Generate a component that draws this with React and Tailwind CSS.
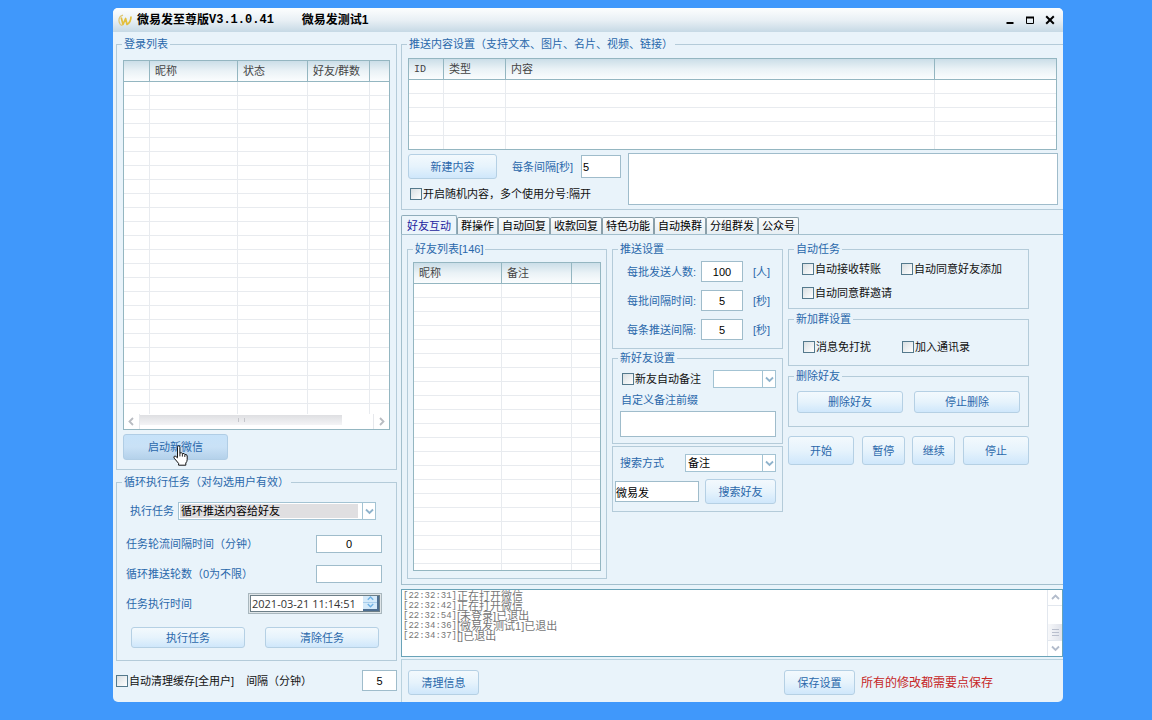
import React from "react";

const CJK = "font-['Liberation_Sans','Noto_Sans_CJK_SC',sans-serif]";
const BLUE = "text-[#2a68ab]";

function Chevron({ dir = "down", className = "size-[9px]" }) {
  const paths = {
    down: "M1 2.5 4.5 6 8 2.5",
    up: "M1 6 4.5 2.5 8 6",
    left: "M6 1 2.5 4.5 6 8",
    right: "M3 1 6.5 4.5 3 8",
  };
  return (
    <svg viewBox="0 0 9 9" className={className} fill="none" stroke="currentColor" strokeWidth="1.8" aria-hidden="true">
      <path d={paths[dir]} />
    </svg>
  );
}

function Group({ title, className = "", bodyClass = "", children }) {
  return (
    <fieldset className={`min-w-0 border border-[#b4cbd9] ${className}`}>
      <legend className={`ml-[5px] px-[2px] leading-[14px] ${BLUE}`}>{title}</legend>
      <div className={bodyClass}>{children}</div>
    </fieldset>
  );
}

function Btn({ className = "", children }) {
  return (
    <button
      type="button"
      className={`flex items-center justify-center rounded-[3px] border border-[#b5d0e4] bg-linear-to-b from-[#f3f9fd] via-[#e6f3fc] to-[#cfe7fb] whitespace-nowrap ${BLUE} ${className}`}
    >
      {children}
    </button>
  );
}

function Check({ className = "", children }) {
  return (
    <label className={`flex h-[14px] items-center gap-px whitespace-nowrap text-[#111] ${className}`}>
      <input
        type="checkbox"
        className="size-[12px] shrink-0 appearance-none border border-[#54798c] bg-linear-to-br from-[#d9dfe2] to-white checked:bg-[#2a68ab]"
      />
      {children}
    </label>
  );
}

function Field({ className = "", ...props }) {
  return (
    <input
      type="text"
      className={`min-w-0 border border-[#9fbccb] bg-white text-black outline-none ${className}`}
      {...props}
    />
  );
}

function Dropdown({ className = "", band = false, label, id, options }) {
  return (
    <div className={`relative flex border border-[#a3c3d3] bg-white ${className}`}>
      <select
        id={id}
        aria-label={label}
        className={`min-w-0 flex-1 appearance-none text-black outline-none ${band ? "my-px ml-px mr-[17px] bg-[#e0dfe1] pl-px" : "mr-[12px] pl-[2px]"}`}
      >
        {options.map((o) => (
          <option key={o}>{o}</option>
        ))}
      </select>
      <span className="pointer-events-none absolute inset-y-0 right-0 flex w-[13px] items-center justify-center border-l border-[#a3c3d3] text-[#8fb3cc]">
        <Chevron />
      </span>
    </div>
  );
}

function Grid({ cols, rows, className = "", children }) {
  return (
    <div className={`flex flex-col overflow-hidden border border-[#94b6c1] bg-white ${className}`}>
      <div className="min-h-0 flex-1 overflow-hidden">
        <table className="w-full table-fixed border-separate border-spacing-0 text-left">
          <colgroup>
            {cols.map((c, i) => (
              <col key={i} className={c.w} />
            ))}
          </colgroup>
          <thead>
            <tr className="h-[21px]">
              {cols.map((c, i) => (
                <th
                  key={i}
                  className="border-r border-b border-[#94b6c1] bg-linear-to-b from-[#cbdee8] via-[#eaf2f6] to-[#fbfdfe] p-0 pl-[5px] font-normal leading-[14px] text-[#444] last:border-r-0"
                >
                  {c.name}
                </th>
              ))}
            </tr>
          </thead>
          <tbody>
            {Array.from({ length: rows }, (_, r) => (
              <tr key={r} className="h-[14px]">
                {cols.map((c, i) => (
                  <td key={i} className="border-r border-b border-[#e8ebef] p-0 last:border-r-0" />
                ))}
              </tr>
            ))}
          </tbody>
        </table>
      </div>
      {children}
    </div>
  );
}

function HandCursor() {
  return (
    <svg viewBox="0 0 15 21" className="pointer-events-none absolute top-[11px] left-[50px] h-[21px] w-[15px]" aria-hidden="true">
      <path
        d="M4.5 12.5V2.2Q4.5.8 5.7.8T6.9 2.2V8Q9.2 7.2 9.4 8.6 11.6 8 11.8 9.5 14.2 9.2 14.2 11V14.5Q14.2 16.5 12.8 18V20.2H5.6V18.4L1.2 13.2Q.4 11.8 1.4 11.2 2.6 10.6 4.5 12.9Z"
        fill="#fff"
        stroke="#111"
        strokeWidth="1"
        strokeLinejoin="round"
      />
      <path d="M6.9 8v3.4M9.4 8.8v2.8M11.8 9.8v2.2" stroke="#111" strokeWidth=".9" />
    </svg>
  );
}

function TitleBar() {
  return (
    <header className="flex h-6 items-center bg-linear-to-b from-[#fdfefe] via-[#e9f0f5] to-[#c6d9e5] pr-[5px] pl-[5px]">
      <svg viewBox="0 0 14 13" className="h-[13px] w-[14px] shrink-0" fill="none" aria-hidden="true">
        <path d="M5 1.2C2 2 .8 4.500 1 7c.2 2.400 1.600 4 3.400 4.600" stroke="#dfc87a" strokeWidth="1.300" />
        <path d="M3.200 3.500 5 10.500 7.600 4.500 9 10.500C11.500 9 13 6.500 13 2.500" stroke="#e3bf3c" strokeWidth="1.700" strokeLinejoin="round" />
      </svg>
      <h1 className="ml-[5px] flex items-center text-[12px] font-bold leading-[14px] whitespace-pre text-black">
        <span>微易发至尊版</span>
        <span className="font-['Liberation_Mono',monospace]">V3.1.0.41</span>
        <span className="ml-7">微易发测试1</span>
      </h1>
      <div className="ml-auto flex items-center gap-[3px] text-black">
        <button type="button" aria-label="最小化" className="flex h-4 w-[17px] items-center justify-center">
          <svg viewBox="0 0 10 10" className="size-[10px]"><path d="M1.500 7h7v2h-7z" fill="currentColor" /></svg>
        </button>
        <button type="button" aria-label="最大化" className="flex h-4 w-[17px] items-center justify-center">
          <svg viewBox="0 0 10 10" className="size-[10px]" fill="none" stroke="currentColor"><path d="M1.500 2.500h7v6h-7z" /><path d="M1 2.500h8" strokeWidth="2" /></svg>
        </button>
        <button type="button" aria-label="关闭" className="flex h-4 w-[17px] items-center justify-center">
          <svg viewBox="0 0 10 10" className="size-[10px]" stroke="currentColor" strokeWidth="2"><path d="M1.200 1.200l7.600 7.600M8.800 1.200l-7.600 7.600" /></svg>
        </button>
      </div>
    </header>
  );
}

function LeftColumn() {
  return (
    <div className="w-[288px] shrink-0 pt-[5px] pr-1 pl-[3px]">
      <Group title="登录列表" bodyClass="pt-[9px] pb-[9px]">
        <Grid
          rows={24}
          className="mx-[6px] h-[370px]"
          cols={[
            { name: "", w: "w-[26px]" },
            { name: "昵称", w: "w-[88px]" },
            { name: "状态", w: "w-[70px]" },
            { name: "好友/群数", w: "w-[62px]" },
            { name: "", w: "w-auto" },
          ]}
        >
          <div className="flex h-[15px] shrink-0 text-[#b9bcc2]">
            <button type="button" aria-label="向左滚动" className="flex w-4 items-center justify-center border-r border-[#e6e8ec]">
              <Chevron dir="left" />
            </button>
            <div className="flex flex-1">
              <div className="mt-px mb-[4px] flex w-[202px] items-center justify-center bg-linear-to-b from-[#dedfe2] to-[#f4f4f6]">
                <span className="h-[4px] w-[7px] border-x border-[#c5c6cb]" />
              </div>
            </div>
            <button type="button" aria-label="向右滚动" className="flex w-4 items-center justify-center border-l border-[#e6e8ec]">
              <Chevron dir="right" />
            </button>
          </div>
        </Grid>
        <div className="relative mt-1 ml-[6px] w-[105px]">
          <button
            type="button"
            className={`flex h-[26px] w-full items-center justify-center rounded-[3px] border border-[#b0cde5] bg-linear-to-b from-[#c6e2f9] via-[#c9e1f6] to-[#b4d1ea] ${BLUE}`}
          >
            启动新微信
          </button>
          <HandCursor />
        </div>
      </Group>

      <Group title="循环执行任务（对勾选用户有效）" className="mt-[5px]" bodyClass="pt-[13px] pr-[14px] pb-3 pl-[9px]">
        <div className={`flex items-center ${BLUE}`}>
          <label htmlFor="task" className="w-[52px] pl-1 whitespace-nowrap">执行任务</label>
          <Dropdown id="task" band className="h-[18px] w-[198px]" options={["循环推送内容给好友"]} />
        </div>
        <div className={`mt-[15px] flex items-center justify-between ${BLUE}`}>
          <label htmlFor="gap">任务轮流间隔时间（分钟）</label>
          <Field id="gap" defaultValue="0" className="h-[18px] w-[66px] text-center" />
        </div>
        <div className={`mt-3 flex items-center justify-between ${BLUE}`}>
          <label htmlFor="rounds">循环推送轮数（0为不限）</label>
          <Field id="rounds" className="h-[18px] w-[66px] text-center" />
        </div>
        <div className={`mt-[10px] flex items-center justify-between ${BLUE}`}>
          <label htmlFor="when">任务执行时间</label>
          <div className="flex h-[21px] w-[134px] border border-[#a9b7be] bg-[#dfe5e8] p-px">
            <div className="flex min-w-0 flex-1 border border-[#6d7f88] bg-white">
              <input
                id="when"
                type="text"
                defaultValue="2021-03-21 11:14:51"
                className="w-0 min-w-0 flex-1 pl-px font-['Open_Sans',sans-serif] text-[11px] text-[#333] outline-none"
              />
              <div className="flex w-[16px] shrink-0 flex-col border-r-2 border-b-2 border-[#4e6f92] bg-[#d5eafa] text-[#6fb1e4]">
                <button type="button" aria-label="增加" className="flex h-1/2 items-center justify-center border-b border-[#a8cdeb]">
                  <Chevron dir="up" className="size-[7px]" />
                </button>
                <button type="button" aria-label="减少" className="flex h-1/2 items-center justify-center">
                  <Chevron className="size-[7px]" />
                </button>
              </div>
            </div>
          </div>
        </div>
        <div className="mt-[13px] flex gap-5 pl-[5px]">
          <Btn className="h-[21px] w-[114px]">执行任务</Btn>
          <Btn className="h-[21px] w-[114px]">清除任务</Btn>
        </div>
      </Group>

      <div className="mt-[9px] flex items-center text-[#111]">
        <Check>自动清理缓存[全用户]</Check>
        <label htmlFor="clean" className="ml-3">间隔（分钟）</label>
        <Field id="clean" defaultValue="5" className="ml-auto h-[21px] w-[35px] text-center" />
      </div>
    </div>
  );
}

function ContentSettings() {
  return (
    <Group
      title="推送内容设置（支持文本、图片、名片、视频、链接）"
      className="border-r-0"
      bodyClass="pt-[7px] pr-[5px] pb-1"
    >
      <Grid
        rows={5}
        className="mr-px ml-[6px] h-[92px]"
        cols={[
          { name: <span className="font-['Liberation_Mono',monospace] text-[10px]">ID</span>, w: "w-[35px]" },
          { name: "类型", w: "w-[62px]" },
          { name: "内容", w: "w-auto" },
          { name: "", w: "w-[121px]" },
        ]}
      />
      <div className="mt-[3px] flex">
        <div className="w-[226px] shrink-0 pt-px pl-[6px]">
          <div className={`flex items-center ${BLUE}`}>
            <Btn className="h-[25px] w-[89px]">新建内容</Btn>
            <label htmlFor="every" className="ml-[15px] w-[69px] whitespace-nowrap">每条间隔[秒]</label>
            <Field id="every" defaultValue="5" className="h-[23px] w-[40px] pl-px" />
          </div>
          <Check className="mt-2 ml-[2px]">开启随机内容，多个使用分号:隔开</Check>
        </div>
        <textarea aria-label="内容" className="h-[52px] min-w-0 flex-1 resize-none border border-[#9fbccb] bg-white outline-none" />
      </div>
    </Group>
  );
}

const TABS = ["好友互动", "群操作", "自动回复", "收款回复", "特色功能", "自动换群", "分组群发", "公众号"];

function Tabs() {
  return (
    <div role="tablist" className="mt-[5px] flex items-end">
      {TABS.map((t, i) => (
        <button
          key={t}
          type="button"
          role="tab"
          aria-selected={i === 0}
          className={
            i === 0
              ? "-mb-px h-5 rounded-t-[2px] border border-b-0 border-[#8fadbb] bg-[#ecf5fb] px-[5px] text-[#1d1d9e]"
              : "h-[17px] rounded-t-[2px] border border-b-0 border-[#8a9fa9] bg-linear-to-b from-[#fafcfd] to-[#e6eef3] px-[3px] text-black"
          }
        >
          {t}
        </button>
      ))}
    </div>
  );
}

function PushRow({ id, label, value, unit }) {
  return (
    <div className={`flex items-center ${BLUE}`}>
      <label htmlFor={id} className="w-[74px] whitespace-nowrap">{label}</label>
      <Field id={id} defaultValue={value} className="h-[21px] w-[42px] text-center" />
      <span className="ml-[10px]">{unit}</span>
    </div>
  );
}

function FriendPanel() {
  return (
    <div role="tabpanel" className="flex items-start gap-[5px] border-t border-b border-l border-[#a3bfcd] pt-[7px] pb-[5px] pl-[5px]">
      <Group title="好友列表[146]" className="w-[200px] shrink-0" bodyClass="pt-[6px] pb-[7px]">
        <Grid
          rows={21}
          className="mx-[5px] h-[309px]"
          cols={[
            { name: "昵称", w: "w-[88px]" },
            { name: "备注", w: "w-[70px]" },
            { name: "", w: "w-auto" },
          ]}
        />
      </Group>

      <div className="w-[171px] shrink-0">
        <Group title="推送设置" bodyClass="flex flex-col gap-2 pt-[5px] pb-2 pl-[14px]">
          <PushRow id="batch" label="每批发送人数:" value="100" unit="[人]" />
          <PushRow id="batchGap" label="每批间隔时间:" value="5" unit="[秒]" />
          <PushRow id="itemGap" label="每条推送间隔:" value="5" unit="[秒]" />
        </Group>
        <Group title="新好友设置" className="mt-[2px]" bodyClass="pt-[5px] pr-[6px] pb-[6px] pl-[7px]">
          <div className="flex items-center justify-between pl-[2px]">
            <Check>新友自动备注</Check>
            <Dropdown label="备注方式" className="h-[18px] w-[63px]" options={[""]} />
          </div>
          <label htmlFor="prefix" className={`mt-[5px] block pl-px leading-[14px] ${BLUE}`}>自定义备注前缀</label>
          <Field id="prefix" className="mt-1 block h-[26px] w-full" />
        </Group>
        <div className="mt-[2px] border border-[#b4cbd9] pt-[7px] pr-[6px] pb-[7px] pl-[2px]">
          <div className={`flex items-center justify-between pl-[5px] ${BLUE}`}>
            <label htmlFor="how">搜索方式</label>
            <Dropdown id="how" className="h-[18px] w-[91px]" options={["备注"]} />
          </div>
          <div className="mt-[7px] flex items-center justify-between">
            <Field aria-label="搜索内容" defaultValue="微易发" className="h-[21px] w-[84px]" />
            <Btn className="h-[25px] w-[71px]">搜索好友</Btn>
          </div>
        </div>
      </div>

      <div className="w-[241px] shrink-0">
        <Group title="自动任务" bodyClass="grid grid-cols-[99px_1fr] gap-y-[10px] pt-[6px] pr-[10px] pb-2 pl-[13px]">
          <Check>自动接收转账</Check>
          <Check>自动同意好友添加</Check>
          <Check>自动同意群邀请</Check>
        </Group>
        <Group title="新加群设置" className="mt-[3px]" bodyClass="grid grid-cols-[99px_1fr] pt-[14px] pr-[10px] pb-[11px] pl-[14px]">
          <Check>消息免打扰</Check>
          <Check>加入通讯录</Check>
        </Group>
        <Group title="删除好友" className="mt-[3px]" bodyClass="flex justify-between px-2 pt-2 pb-[13px]">
          <Btn className="h-[22px] w-[106px]">删除好友</Btn>
          <Btn className="h-[22px] w-[106px]">停止删除</Btn>
        </Group>
        <div className="mt-[9px] flex justify-between">
          <Btn className="h-[29px] w-[66px]">开始</Btn>
          <Btn className="h-[29px] w-[43px]">暂停</Btn>
          <Btn className="h-[29px] w-[43px]">继续</Btn>
          <Btn className="h-[29px] w-[66px]">停止</Btn>
        </div>
      </div>
    </div>
  );
}

const LOG = [
  ["[22:32:31]", "正在打开微信"],
  ["[22:32:42]", "正在打开微信"],
  ["[22:32:54]", "[未登录]已退出"],
  ["[22:34:36]", "[微易发测试1]已退出"],
  ["[22:34:37]", "[]已退出"],
];

function LogBox() {
  return (
    <div className="mt-1 flex h-[68px] border border-[#69a3b8] bg-white">
      <div role="log" className="flex-1 overflow-hidden pt-px pl-px leading-[10px] text-[#777]">
        {LOG.map(([time, msg]) => (
          <p key={time} className="flex h-[10px] items-center">
            <span className="font-['Liberation_Mono',monospace] text-[9px]">{time}</span>
            <span>{msg}</span>
          </p>
        ))}
      </div>
      <div className="flex w-[15px] flex-col border-l border-[#e2e7ee] text-[#b3bccb]">
        <button type="button" aria-label="向上滚动" className="flex h-4 items-center justify-center border-b border-[#e2e7ee]">
          <Chevron dir="up" />
        </button>
        <div className="flex flex-1 items-end">
          <div className="flex h-4 w-full flex-col items-center justify-center gap-[2px] bg-linear-to-r from-[#f7f8fa] to-[#dfe2ea]">
            <span className="h-px w-[7px] bg-[#b9bfcd]" />
            <span className="h-px w-[7px] bg-[#b9bfcd]" />
            <span className="h-px w-[7px] bg-[#b9bfcd]" />
          </div>
        </div>
        <button type="button" aria-label="向下滚动" className="flex h-4 items-center justify-center border-t border-[#e2e7ee]">
          <Chevron />
        </button>
      </div>
    </div>
  );
}

export default function App() {
  return (
    <div className={`flex min-h-screen flex-col bg-[#4098fb] pt-2 pr-[89px] pb-[18px] pl-[113px] text-[11px] leading-[14px] ${CJK}`}>
      <main className="flex flex-1 flex-col overflow-hidden rounded-[5px] bg-[#e9f3fa]">
        <TitleBar />
        <div className="flex flex-1">
          <LeftColumn />
          <div className="flex min-w-0 flex-1 flex-col pt-[5px]">
            <ContentSettings />
            <Tabs />
            <FriendPanel />
            <LogBox />
            <footer className="mt-[2px] flex flex-1 items-start border-t border-l border-[#b9d2df] pt-[10px] pl-[6px]">
              <Btn className="h-[25px] w-[71px]">清理信息</Btn>
              <div className="ml-auto flex items-center pr-[70px]">
                <Btn className="h-[25px] w-[71px]">保存设置</Btn>
                <p className="ml-[6px] text-[12px] whitespace-nowrap text-[#c62626]">所有的修改都需要点保存</p>
              </div>
            </footer>
          </div>
        </div>
      </main>
    </div>
  );
}
